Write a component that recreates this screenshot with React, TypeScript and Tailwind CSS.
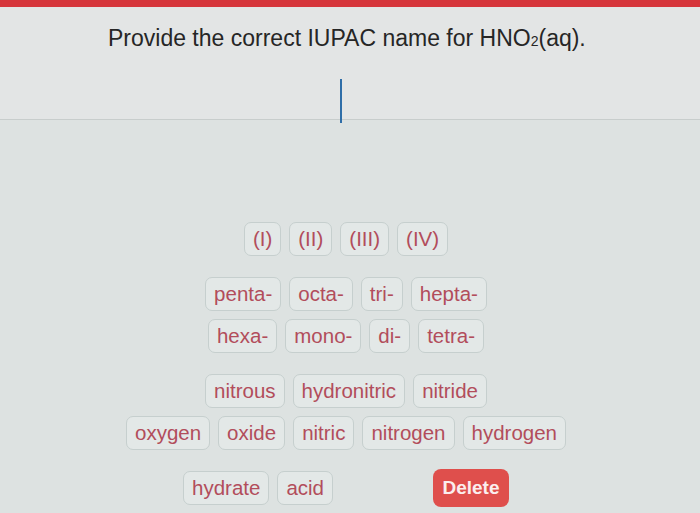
import React from "react"

const tileRows: string[][][] = [
  [["(I)", "(II)", "(III)", "(IV)"]],
  [
    ["penta-", "octa-", "tri-", "hepta-"],
    ["hexa-", "mono-", "di-", "tetra-"],
  ],
  [
    ["nitrous", "hydronitric", "nitride"],
    ["oxygen", "oxide", "nitric", "nitrogen", "hydrogen"],
  ],
]

function Tile({ label }: { label: string }) {
  return (
    <button className="rounded-[7px] border border-[#c6cfce] bg-[#e3e8e7] px-2 py-[4px] text-[20.5px] leading-[24px] text-[#b24d5b]">
      {label}
    </button>
  )
}

export default function App() {
  return (
    <div
      className="relative h-[513px] w-[700px] overflow-hidden bg-[#dde2e1]"
      style={{ fontFamily: '"Liberation Sans", Arial, sans-serif' }}
    >
      <div className="h-[7px] bg-[#d6353b]" />

      {/* question + answer field */}
      <div className="h-[113px] border-b border-[#c8cdcc] bg-[#e3e5e5]">
        <h1 className="pl-[108px] pt-[18px] text-[23px] leading-[26px] text-[#262626]">
          Provide the correct IUPAC name for HNO
          <span className="text-[14px]">2</span>(aq).
        </h1>
        <div className="ml-[340px] mt-[25px] h-[44px] w-[2px] bg-[#2f6ea8]" />
      </div>

      {/* tile bank */}
      <div className="mt-[102px] flex flex-col items-center gap-[21px] pr-[8px]">
        {tileRows.map((group, gi) => (
          <div key={gi} className="flex flex-col items-center gap-[8px]">
            {group.map((row, ri) => (
              <div key={ri} className="flex gap-2">
                {row.map((t) => (
                  <Tile key={t} label={t} />
                ))}
              </div>
            ))}
          </div>
        ))}

        <div className="-mt-[2px] flex w-[326px] items-center justify-between">
          <div className="flex gap-2">
            <Tile label="hydrate" />
            <Tile label="acid" />
          </div>
          <button className="h-[38px] w-[76px] rounded-[8px] bg-[#df4f4c] text-[19px] font-bold text-[#fbeeee]">
            Delete
          </button>
        </div>
      </div>
    </div>
  )
}
